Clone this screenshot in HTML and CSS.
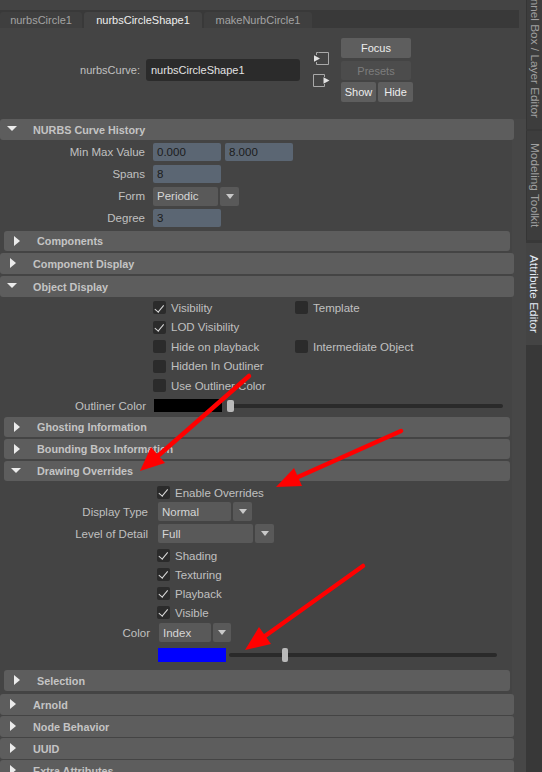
FILE: index.html
```html
<!DOCTYPE html>
<html>
<head>
<meta charset="utf-8">
<title>Attribute Editor</title>
<link rel="stylesheet" href="styles.css">
</head>
<body>
<div class="app">
  <div class="main">
    <div class="tabbar">
      <div class="tab tab-a">nurbsCircle1</div>
      <div class="tab tab-b">nurbsCircleShape1</div>
      <div class="tab tab-c">makeNurbCircle1</div>
    </div>

    <div class="topblock">
      <div class="objrow">
        <span class="objlabel">nurbsCurve:</span>
        <div class="objfield">nurbsCircleShape1</div>
      </div>
      <div class="icons">
        <svg class="ico" width="17" height="13" viewBox="0 0 17 13">
          <path d="M5.5 0.5 H15.5 V12.5 H3.5 V10" fill="none" stroke="#a9a9a9" stroke-width="1"/>
          <path d="M3.5 3 V0.5 H5.5" fill="none" stroke="#a9a9a9" stroke-width="1"/>
          <polygon points="1,3.2 7,6.5 1,9.8" fill="#e2e2e2"/>
        </svg>
        <svg class="ico ico2" width="17" height="13" viewBox="0 0 17 13">
          <path d="M11.5 3 V0.5 H0.5 V12.5 H11.5 V10" fill="none" stroke="#a9a9a9" stroke-width="1"/>
          <polygon points="10.5,3.2 16.5,6.5 10.5,9.8" fill="#e2e2e2"/>
        </svg>
      </div>
      <div class="buttons">
        <div class="btn btn-focus">Focus</div>
        <div class="btn btn-presets">Presets</div>
        <div class="btnrow">
          <div class="btn btn-small">Show</div>
          <div class="btn btn-small">Hide</div>
        </div>
      </div>
    </div>

    <div class="scroll">
      <!-- NURBS Curve History -->
      <div class="hdr top open"><span class="tri"><span class="down"></span></span><span class="htxt">NURBS Curve History</span></div>
      <div class="body nurbs-body">
        <div class="arow"><span class="alabel">Min Max Value</span><span class="nf">0.000</span><span class="nf">8.000</span></div>
        <div class="arow"><span class="alabel">Spans</span><span class="nf">8</span></div>
        <div class="arow"><span class="alabel">Form</span><span class="dd dd-form">Periodic</span><span class="ddarrow"><span class="ddtri"></span></span></div>
        <div class="arow"><span class="alabel">Degree</span><span class="nf">3</span></div>
        <div class="hdr nested"><span class="tri"><span class="right"></span></span><span class="htxt">Components</span></div>
      </div>

      <div class="hdr top"><span class="tri"><span class="right"></span></span><span class="htxt">Component Display</span></div>

      <!-- Object Display -->
      <div class="hdr top open"><span class="tri"><span class="down"></span></span><span class="htxt">Object Display</span></div>
      <div class="body objdisp-body">
        <div class="crow">
          <div class="ccell"><span class="cb on"></span>Visibility</div>
          <div class="ccell"><span class="cb"></span>Template</div>
        </div>
        <div class="crow">
          <div class="ccell"><span class="cb on"></span>LOD Visibility</div>
        </div>
        <div class="crow">
          <div class="ccell"><span class="cb"></span>Hide on playback</div>
          <div class="ccell"><span class="cb"></span>Intermediate Object</div>
        </div>
        <div class="crow">
          <div class="ccell"><span class="cb"></span>Hidden In Outliner</div>
        </div>
        <div class="crow">
          <div class="ccell"><span class="cb"></span>Use Outliner Color</div>
        </div>
        <div class="colrow">
          <span class="alabel ol-label">Outliner Color</span>
          <span class="swatch black"></span>
          <span class="track ol-track"><span class="handle ol-handle"></span></span>
        </div>
      </div>

      <div class="inner">
        <div class="hdr nested"><span class="tri"><span class="right"></span></span><span class="htxt">Ghosting Information</span></div>
        <div class="hdr nested"><span class="tri"><span class="right"></span></span><span class="htxt">Bounding Box Information</span></div>
        <div class="hdr nested open"><span class="tri"><span class="down"></span></span><span class="htxt">Drawing Overrides</span></div>
        <div class="body draw-body">
          <div class="crow drow">
            <div class="ccell"><span class="cb on"></span>Enable Overrides</div>
          </div>
          <div class="arow2">
            <span class="alabel dlabel">Display Type</span>
            <span class="dd dd-display">Normal</span><span class="ddarrow"><span class="ddtri"></span></span>
          </div>
          <div class="arow2">
            <span class="alabel dlabel">Level of Detail</span>
            <span class="dd dd-lod">Full</span><span class="ddarrow"><span class="ddtri"></span></span>
          </div>
          <div class="crow drow"><div class="ccell"><span class="cb on"></span>Shading</div></div>
          <div class="crow drow"><div class="ccell"><span class="cb on"></span>Texturing</div></div>
          <div class="crow drow"><div class="ccell"><span class="cb on"></span>Playback</div></div>
          <div class="crow drow"><div class="ccell"><span class="cb on"></span>Visible</div></div>
          <div class="arow2 colorsel">
            <span class="alabel clabel">Color</span>
            <span class="dd dd-color">Index</span><span class="ddarrow ddarrow-sm"><span class="ddtri"></span></span>
          </div>
          <div class="swrow">
            <span class="swatch blue"></span>
            <span class="track ov-track"><span class="handle ov-handle"></span></span>
          </div>
        </div>
        <div class="hdr nested sel"><span class="tri"><span class="right"></span></span><span class="htxt">Selection</span></div>
      </div>

      <div class="hdr top tail"><span class="tri"><span class="right"></span></span><span class="htxt">Arnold</span></div>
      <div class="hdr top tail"><span class="tri"><span class="right"></span></span><span class="htxt">Node Behavior</span></div>
      <div class="hdr top tail"><span class="tri"><span class="right"></span></span><span class="htxt">UUID</span></div>
      <div class="hdr top tail"><span class="tri"><span class="right"></span></span><span class="htxt">Extra Attributes</span></div>
    </div>
  </div>

  <div class="vtabs">
    <div class="vt vt1"><span>Channel Box / Layer Editor</span></div>
    <div class="vt vt2"><span>Modeling Toolkit</span></div>
    <div class="vt vt3"><span>Attribute Editor</span></div>
  </div>
</div>

<svg class="annot" width="542" height="772" viewBox="0 0 542 772">
  <g stroke="#ff0000" stroke-width="4.5" stroke-linecap="round" fill="none">
    <line x1="249" y1="376" x2="159" y2="455"/>
    <line x1="401" y1="431" x2="298" y2="477"/>
    <line x1="363" y1="566" x2="265" y2="636"/>
  </g>
  <g fill="#ff0000">
    <polygon points="140,471 165,463 151,447"/>
    <polygon points="276,487 302,486 294,468"/>
    <polygon points="245,650 271,644 259,627"/>
  </g>
</svg>
</body>
</html>
```

FILE: styles.css
```css
* { box-sizing: border-box; }

html, body {
  margin: 0;
  padding: 0;
}

body {
  width: 542px;
  height: 772px;
  overflow: hidden;
  position: relative;
  background: #444444;
  font-family: "Liberation Sans", Arial, sans-serif;
  color: #c0c0c0;
  font-size: 11.5px;
}

.app {
  display: flex;
  height: 772px;
}

.main {
  width: 526px;
  flex: none;
  display: flex;
  flex-direction: column;
}

/* top tabs */
.tabbar {
  flex: none;
  margin-top: 10px;
  width: 519px;
  height: 18px;
  background: #393939;
  display: flex;
  align-items: flex-end;
  gap: 2px;
}

.tab {
  height: 16px;
  display: flex;
  align-items: center;
  justify-content: center;
  background: #3f3f3f;
  color: #a3a3a3;
  font-size: 11px;
  border-radius: 3px 3px 0 0;
}

.tab-a { width: 82px; }
.tab-b { width: 118px; background: #444444; color: #eeeeee; }
.tab-c { width: 108px; }

/* object name + buttons */
.topblock {
  height: 91px;
  display: flex;
  align-items: flex-start;
  flex: none;
}

.objrow {
  margin-top: 31px;
  display: flex;
  align-items: center;
}

.objlabel {
  width: 140px;
  text-align: right;
  font-size: 11px;
  color: #c0c0c0;
}

.objfield {
  margin-left: 6px;
  width: 154px;
  height: 22px;
  background: #2b2b2b;
  border-radius: 3px;
  color: #e2e2e2;
  font-size: 11px;
  display: flex;
  align-items: center;
  padding-left: 5px;
}

.icons {
  margin-left: 13px;
  width: 17px;
  padding-top: 24px;
  display: flex;
  flex-direction: column;
}

.ico { display: block; }
.ico2 { margin-top: 9px; }

.buttons {
  margin-left: 11px;
  padding-top: 10px;
  display: flex;
  flex-direction: column;
}

.btn {
  height: 20px;
  display: flex;
  align-items: center;
  justify-content: center;
  background: #5e5e5e;
  color: #ededed;
  font-size: 11px;
  border-radius: 2px;
}

.btn-focus { width: 70px; }
.btn-presets { width: 70px; height: 19px; margin-top: 3px; background: #4c4c4c; color: #7d7d7d; }

.btnrow {
  display: flex;
  gap: 2px;
  margin-top: 2px;
}

.btn-small { width: 35px; }

/* scroll area */
.scroll {
  flex: 1;
  background: linear-gradient(to right, #444444 512px, #474747 512px);
}

.hdr {
  display: flex;
  align-items: center;
  background: #5d5d5d;
  border-radius: 3px;
  margin-bottom: 2px;
}

.hdr.open {
  margin-bottom: 0;
}

.hdr.top {
  width: 514px;
  height: 21px;
}

.hdr.tail {
  margin-bottom: 1px;
}

.hdr.nested {
  width: 506px;
  height: 20px;
  margin-left: 4px;
}

.hdr.sel {
  height: 21px;
  margin-bottom: 3px;
}

.tri {
  width: 16px;
  margin-left: 4px;
  display: flex;
  justify-content: center;
  align-items: center;
}

.down {
  width: 0;
  height: 0;
  border-left: 5px solid transparent;
  border-right: 5px solid transparent;
  border-top: 5px solid #ebebeb;
  margin-top: -2px;
}

.right {
  width: 0;
  height: 0;
  border-top: 5px solid transparent;
  border-bottom: 5px solid transparent;
  border-left: 6px solid #ebebeb;
  margin-left: 1px;
  margin-top: -1px;
}

.htxt {
  margin-left: 13px;
  font-weight: bold;
  font-size: 10.8px;
  color: #c4c4c4;
}

/* NURBS body */
.nurbs-body {
  padding-top: 3px;
}

.arow {
  display: flex;
  align-items: center;
  height: 18px;
  margin-bottom: 4px;
}

.alabel {
  width: 145px;
  text-align: right;
  margin-right: 8px;
  color: #c0c0c0;
  font-size: 11.5px;
  flex: none;
}

.nf {
  width: 68px;
  height: 18px;
  background: #5b6673;
  border-radius: 2px;
  padding-left: 4px;
  margin-right: 4px;
  color: #1c1c1c;
  display: flex;
  align-items: center;
  font-size: 11.5px;
}

.dd {
  height: 19px;
  background: #595959;
  border-radius: 2px;
  padding-left: 4px;
  color: #d6d6d6;
  display: flex;
  align-items: center;
  font-size: 11.5px;
}

.dd-form { width: 65px; }
.dd-display { width: 73px; }
.dd-lod { width: 95px; }
.dd-color { width: 52px; }

.ddarrow {
  width: 19px;
  height: 19px;
  margin-left: 2px;
  background: #595959;
  border-radius: 2px;
  display: flex;
  align-items: center;
  justify-content: center;
}

.ddarrow-sm { width: 18px; }

.ddtri {
  width: 0;
  height: 0;
  border-left: 4.5px solid transparent;
  border-right: 4.5px solid transparent;
  border-top: 5px solid #c9c9c9;
}

/* object display */
.objdisp-body {
  padding-top: 1px;
  padding-bottom: 1.5px;
}

.crow {
  display: flex;
  align-items: center;
  height: 19.5px;
  padding-left: 153px;
}

.ccell {
  width: 142px;
  display: flex;
  align-items: center;
  color: #c0c0c0;
  font-size: 11.5px;
  white-space: nowrap;
}

.cb {
  width: 13px;
  height: 13px;
  background: #2b2b2b;
  border-radius: 2px;
  margin-right: 5px;
  flex: none;
  display: flex;
  align-items: center;
  justify-content: center;
}

.cb.on::after {
  content: "";
  width: 3.5px;
  height: 7.5px;
  border: solid #dcdcdc;
  border-width: 0 1.7px 1.7px 0;
  transform: translate(0, -1px) rotate(40deg);
}

.colrow {
  display: flex;
  align-items: center;
  height: 20px;
}

.ol-label {
  width: 146px;
}

.swatch {
  width: 68px;
  height: 13px;
  flex: none;
}

.black { background: #000000; }
.blue { background: #0000ff; height: 14px; }

.track {
  position: relative;
  height: 4px;
  background: #2a2a2a;
  border-radius: 2px;
  flex: none;
}

.handle {
  position: absolute;
  top: -4px;
  width: 7px;
  height: 12px;
  background: #b9b9b9;
  border-radius: 2px;
}

.ol-track {
  margin-left: 5px;
  width: 276px;
}

.ol-handle { left: 0; }

/* drawing overrides */
.draw-body {
  padding-top: 2px;
  padding-bottom: 8px;
}

.drow {
  height: 19px;
  padding-left: 157px;
}

.arow2 {
  display: flex;
  align-items: center;
  height: 19px;
  margin-bottom: 3px;
}

.dlabel {
  width: 148px;
  margin-right: 10px;
}

.colorsel {
  margin-top: 1px;
  margin-bottom: 0;
}

.clabel {
  width: 150px;
  margin-right: 9px;
}

.swrow {
  display: flex;
  align-items: center;
  height: 14px;
  margin-top: 6px;
  padding-left: 158px;
}

.ov-track {
  margin-left: 3px;
  width: 268px;
}

.ov-handle {
  left: 53px;
  top: -5px;
  height: 14px;
  width: 6px;
}

/* vertical tabs */
.vtabs {
  width: 16px;
  flex: none;
  background: #383838;
  display: flex;
  flex-direction: column;
}

.vt {
  display: flex;
  flex-direction: column;
  align-items: center;
  justify-content: center;
  background: #3d3d3d;
  color: #a0a0a0;
  font-size: 11.8px;
  border-left: 1px solid #353535;
  flex: none;
}

.vt span {
  writing-mode: vertical-rl;
  white-space: nowrap;
}

.vt1 {
  height: 129px;
  justify-content: flex-end;
  padding-bottom: 11px;
}

.vt2 {
  height: 109px;
  margin-top: 2px;
}

.vt3 {
  height: 102px;
  margin-top: 3px;
  background: #444444;
  border-left: none;
  color: #e4edf7;
}

/* annotation arrows */
.annot {
  position: absolute;
  left: 0;
  top: 0;
  pointer-events: none;
}
```
